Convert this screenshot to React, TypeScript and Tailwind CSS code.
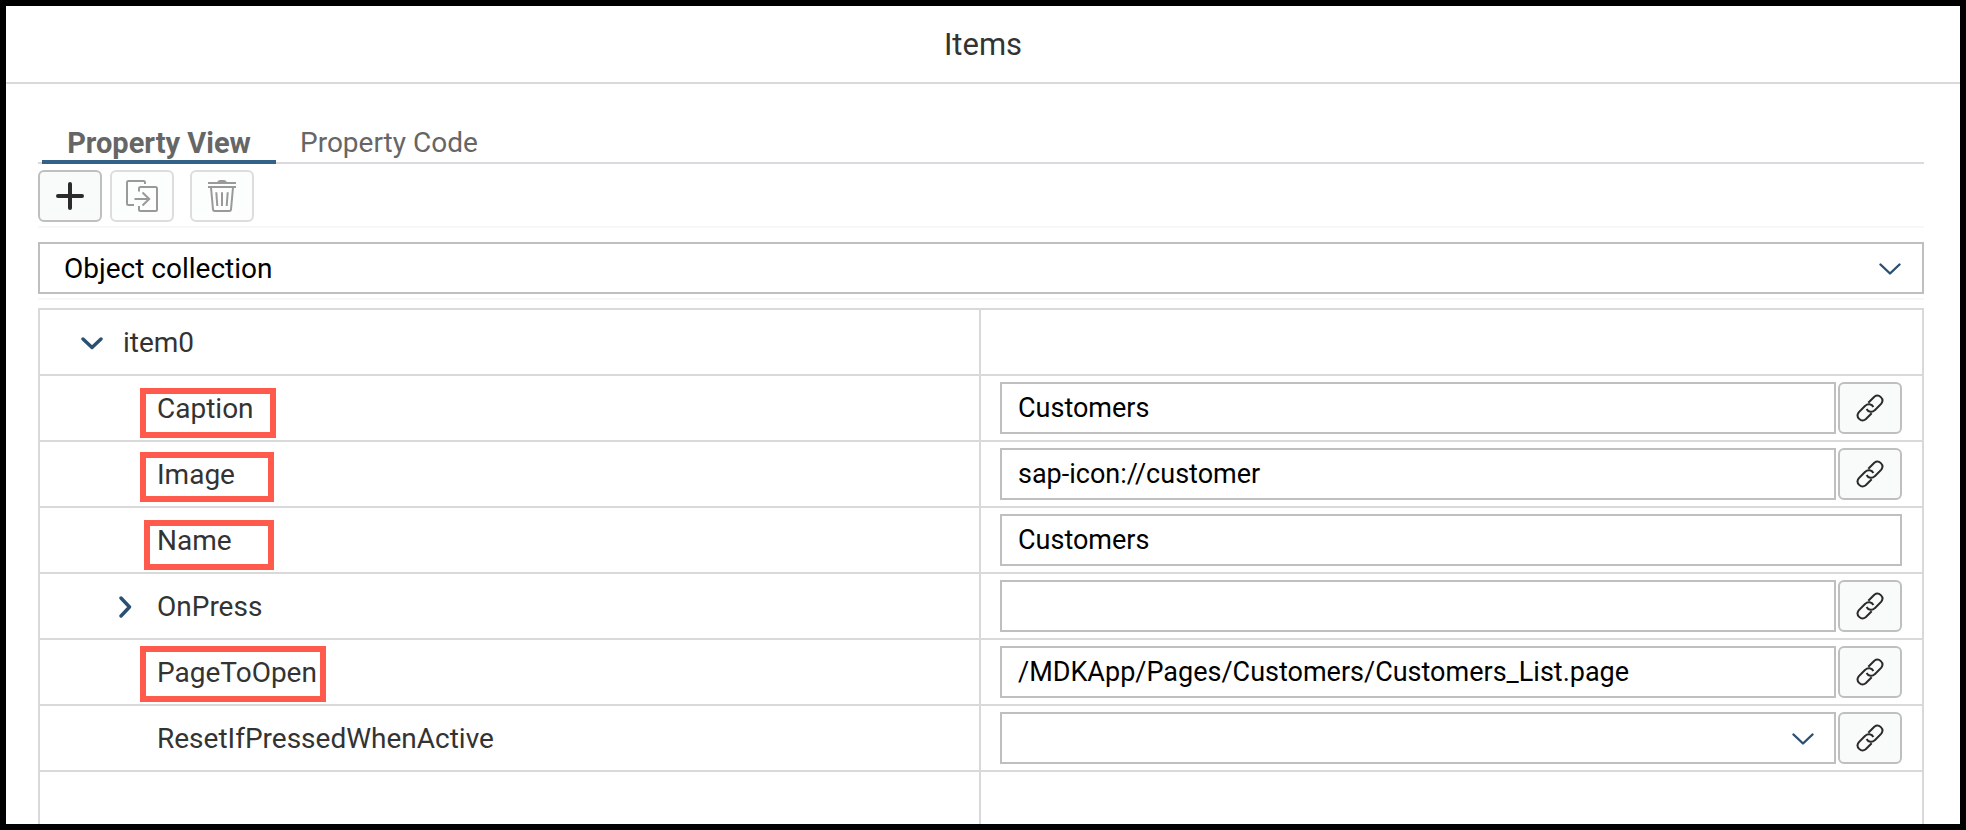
import { useState } from "react";
import type { ReactNode } from "react";

function PlusIcon() {
  return (
    <svg className="size-7" viewBox="0 0 28 28" fill="none" stroke="#2b2b2b" strokeWidth="4" strokeLinecap="round" aria-hidden="true">
      <path d="M14 2V26M2 14H26" />
    </svg>
  );
}

function CopyToIcon() {
  return (
    <svg className="size-8" viewBox="0 0 32 32" fill="none" stroke="#999999" strokeWidth="2" aria-hidden="true">
      <path d="M19 4V2.5Q19 1 17.5 1H2.5Q1 1 1 2.5V23.5Q1 25 2.5 25H8" />
      <path d="M13 11.5V8.5Q13 7 14.5 7H29.5Q31 7 31 8.5V29.5Q31 31 29.5 31H14.5Q13 31 13 29.5V26" />
      <path d="M8.500 19H23M16.500 12.500L23.200 19L16.500 25.500" />
    </svg>
  );
}

function TrashIcon() {
  return (
    <svg className="h-8 w-7" viewBox="0 0 28 32" fill="none" stroke="#999999" strokeWidth="2" aria-hidden="true">
      <path d="M0 3H28M0 7H28M3 7.500L5 29.500Q5.200 31 6.700 31H21.300Q22.800 31 23 29.500L25 7.500" />
      <path d="M8.300 12.300L9.300 26M14 12.300V26M19.700 12.300L18.700 26" />
      <path d="M9 2.500Q9.500 0 12 0H16Q18.500 0 19 2.500Z" fill="#999999" stroke="none" />
    </svg>
  );
}

function LinkIcon() {
  return (
    <svg className="size-7" viewBox="0 0 28 28" fill="none" stroke="#2b2b2b" strokeWidth="2" aria-hidden="true">
      <path d="M12.300 8.700L18.300 2.700A5 5 0 0 1 25.300 9.700L18.800 16.200A5 5 0 0 1 10.600 15" />
      <path d="M15.700 19.300L9.700 25.300A5 5 0 0 1 2.700 18.300L9.200 11.800A5 5 0 0 1 17.400 13" />
    </svg>
  );
}

function SelectArrow() {
  return (
    <svg className="h-3 w-[22px]" viewBox="0 0 22 12" fill="none" stroke="#2a4f73" strokeWidth="2.4" strokeLinecap="round" strokeLinejoin="round" aria-hidden="true">
      <path d="M1.500 1.500L11 10.500L20.500 1.500" />
    </svg>
  );
}

function TreeArrow({ open }: { open: boolean }) {
  return (
    <svg
      className={open ? "h-[13px] w-[22px]" : "h-[22px] w-[13px]"}
      viewBox={open ? "0 0 22 13" : "0 0 13 22"}
      fill="none"
      stroke="#2a4f73"
      strokeWidth="3.4"
      strokeLinecap="round"
      strokeLinejoin="round"
      aria-hidden="true"
    >
      <path d={open ? "M2 2L11 10.500L20 2" : "M2 2L10.500 11L2 20"} />
    </svg>
  );
}

function ToolButton({ label, disabled, children }: { label: string; disabled?: boolean; children: ReactNode }) {
  return (
    <button
      type="button"
      aria-label={label}
      disabled={disabled}
      className="flex h-13 w-16 shrink-0 items-center justify-center rounded-md border-2 border-[#bfbfbf] bg-[#f9fafa] disabled:border-[#dddddd] disabled:bg-[#fcfdfd]"
    >
      {children}
    </button>
  );
}

type Row = {
  name: string;
  value: string;
  kind: "text" | "select";
  link: boolean;
  expandable?: boolean;
  mark?: string;
};

const rows: Row[] = [
  { name: "Caption", value: "Customers", kind: "text", link: true, mark: "left-[100px] top-3 h-[50px] w-[136px]" },
  { name: "Image", value: "sap-icon://customer", kind: "text", link: true, mark: "left-[100px] top-[10px] h-[50px] w-[134px]" },
  { name: "Name", value: "Customers", kind: "text", link: false, mark: "left-[104px] top-3 h-[50px] w-[130px]" },
  { name: "OnPress", value: "", kind: "text", link: true, expandable: true },
  { name: "PageToOpen", value: "/MDKApp/Pages/Customers/Customers_List.page", kind: "text", link: true, mark: "left-[100px] top-1.5 h-14 w-[186px]" },
  { name: "ResetIfPressedWhenActive", value: "", kind: "select", link: true },
];

function PropertyRow({ row }: { row: Row }) {
  const [value, setValue] = useState(row.value);
  const id = "prop-" + row.name;
  return (
    <tr>
      <td className="border-r-2 border-b-2 border-[#d9d9d9] p-0">
        <div className="relative flex h-16 items-center pt-0.5 pl-[117px]">
          {row.expandable && (
            <button type="button" aria-label={"Expand " + row.name} className="absolute left-[79px]">
              <TreeArrow open={false} />
            </button>
          )}
          <label htmlFor={id}>{row.name}</label>
          {row.mark && <span className={"pointer-events-none absolute border-6 border-[#ff5a4c] " + row.mark} />}
        </div>
      </td>
      <td className="border-b-2 border-[#d9d9d9] p-0">
        <div className="flex h-16 items-center gap-0.5 pr-5 pl-[19px]">
          {row.kind === "text" ? (
            <input
              id={id}
              type="text"
              value={value}
              onChange={(e) => setValue(e.target.value)}
              className="h-13 min-w-0 flex-1 border-2 border-[#bfbfbf] bg-white px-4 text-[27px] text-black"
            />
          ) : (
            <div className="relative min-w-0 flex-1">
              <select
                id={id}
                value={value}
                onChange={(e) => setValue(e.target.value)}
                className="block h-13 w-full appearance-none border-2 border-[#bfbfbf] bg-white px-4 text-[27px] text-black"
              >
                <option value=""></option>
                <option value="true">true</option>
                <option value="false">false</option>
              </select>
              <span className="pointer-events-none absolute inset-y-0 right-[22px] flex items-center pt-0.5">
                <SelectArrow />
              </span>
            </div>
          )}
          {row.link && (
            <ToolButton label={"Bind " + row.name}>
              <LinkIcon />
            </ToolButton>
          )}
        </div>
      </td>
    </tr>
  );
}

export default function App() {
  return (
    <div className="flex min-h-screen flex-col border-6 border-black bg-white font-[Roboto,'Liberation_Sans',sans-serif] text-[28px] leading-8 text-[#333333]">
      <header className="flex h-[78px] items-center justify-center border-b-2 border-[#d9d9d9] pt-0.5">
        <h1 className="text-[31px] leading-10">Items</h1>
      </header>
      <main className="flex grow flex-col pt-9 pr-9 pl-8">
        <div role="tablist" className="flex h-11 border-b-2 border-[#d9d9df] pl-1 text-[#666666]">
          <button type="button" role="tab" aria-selected="true" className="-mb-0.5 h-11 min-w-[234px] border-b-4 border-[#346187] px-6 pt-1.5 text-[29px] font-bold">
            Property View
          </button>
          <button type="button" role="tab" aria-selected="false" className="h-10 px-6 pt-1.5">
            Property Code
          </button>
        </div>
        <div className="flex border-b-2 border-[#f7f7f7] pt-1.5 pb-1">
          <ToolButton label="Add">
            <PlusIcon />
          </ToolButton>
          <div className="ml-2 flex gap-4">
            <ToolButton label="Duplicate" disabled>
              <CopyToIcon />
            </ToolButton>
            <ToolButton label="Delete" disabled>
              <TrashIcon />
            </ToolButton>
          </div>
        </div>
        <div className="border-b-2 border-[#f7f7f7] pt-3.5 pb-1">
          <div className="relative">
            <select aria-label="Collection type" className="block h-13 w-full appearance-none border-2 border-[#bfbfbf] bg-white px-6 pt-0.5 text-black">
              <option>Object collection</option>
            </select>
            <span className="pointer-events-none absolute inset-y-0 right-[23px] flex items-center pt-0.5">
              <SelectArrow />
            </span>
          </div>
        </div>
        <table className="mt-2 w-full table-fixed border-separate border-spacing-0 border-2 border-b-0 border-[#d9d9d9]">
          <tbody>
            <tr>
              <td className="w-1/2 border-r-2 border-b-2 border-[#d9d9d9] p-0">
                <div className="flex h-16 items-center gap-5 pt-0.5 pl-[41px]">
                  <button type="button" aria-label="Collapse item0">
                    <TreeArrow open />
                  </button>
                  <span>item0</span>
                </div>
              </td>
              <td className="border-b-2 border-[#d9d9d9] p-0" />
            </tr>
            {rows.map((row) => (
              <PropertyRow key={row.name} row={row} />
            ))}
            <tr>
              <td className="h-13 border-r-2 border-[#d9d9d9] p-0" />
              <td className="p-0" />
            </tr>
          </tbody>
        </table>
      </main>
    </div>
  );
}
